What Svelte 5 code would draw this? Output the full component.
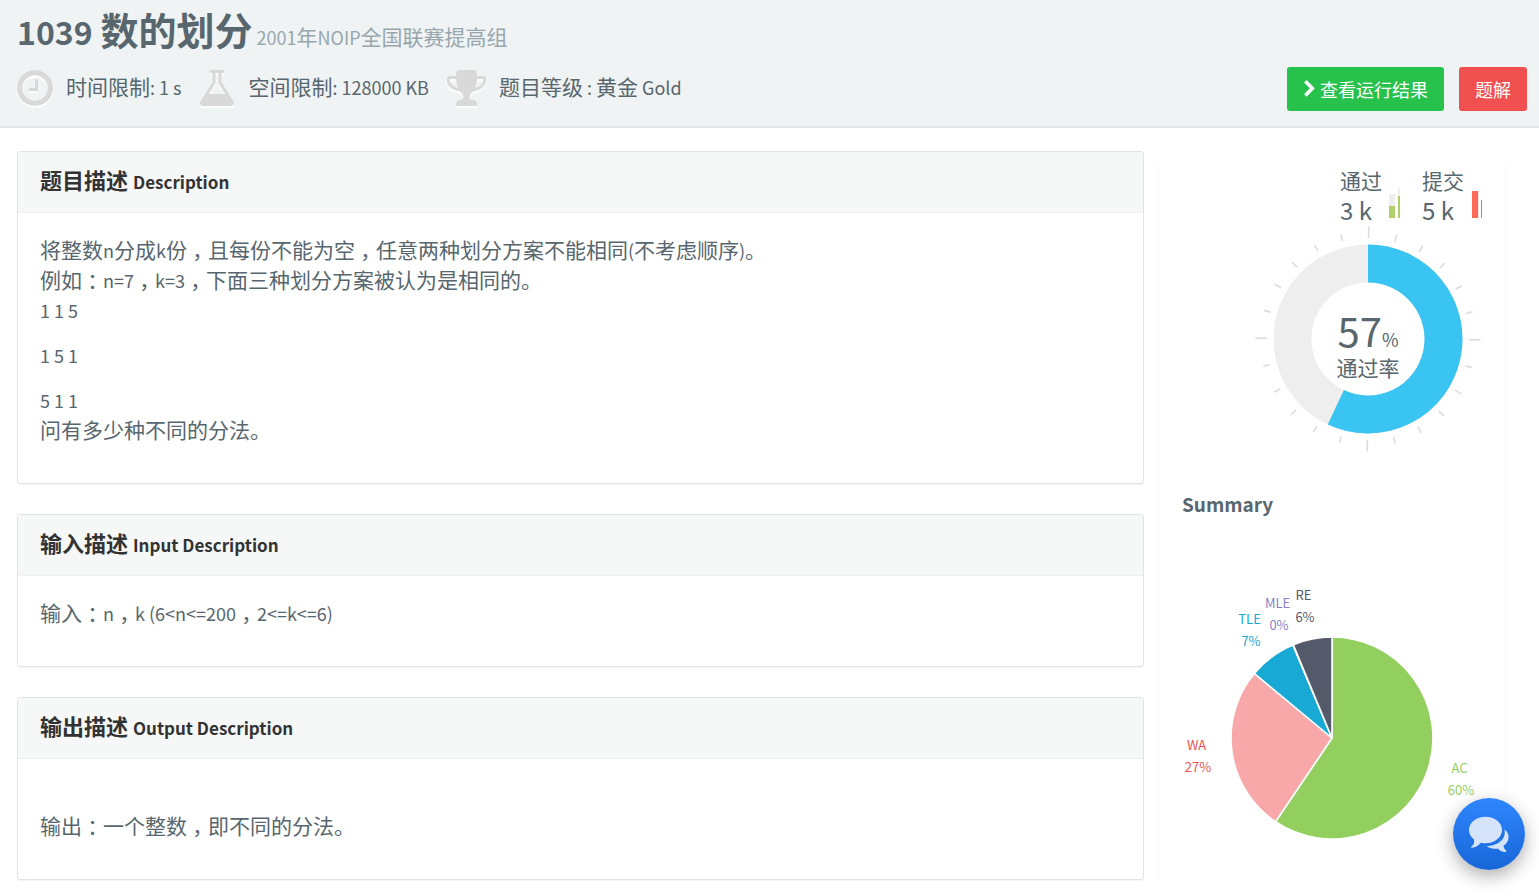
<script>
  const FULL_WIDTH_MARK = /^[\uff0c\uff1a]$/;

  // Splits mixed text so Latin runs and full-width marks can be set in their own style.
  function runs(text) {
    const parts = text.match(/[\u0020-\u007e]+|[\uff0c\uff1a]|[^\u0020-\u007e\uff0c\uff1a]+/g) ?? [];
    return parts.map((part) => ({
      part,
      kind: /^[\u0020-\u007e]/.test(part) ? 'latin' : FULL_WIDTH_MARK.test(part) ? 'mark' : 'han',
    }));
  }

  const panels = [
    {
      title: '题目描述',
      sub: 'Description',
      paragraphs: [
        [
          '将整数n分成k份\uff0c且每份不能为空\uff0c任意两种划分方案不能相同(不考虑顺序)。',
          '例如\uff1an=7\uff0ck=3\uff0c下面三种划分方案被认为是相同的。',
          '1 1 5',
        ],
        ['1 5 1'],
        ['5 1 1', '问有多少种不同的分法。'],
      ],
    },
    { title: '输入描述', sub: 'Input Description', paragraphs: [['输入\uff1an\uff0ck (6<n<=200\uff0c2<=k<=6)']] },
    { title: '输出描述', sub: 'Output Description', paragraphs: [['', '输出\uff1a一个整数\uff0c即不同的分法。']] },
  ];

  function point(cx, cy, r, degrees) {
    const a = (degrees * Math.PI) / 180;
    return `${(cx + r * Math.sin(a)).toFixed(2)} ${(cy - r * Math.cos(a)).toFixed(2)}`;
  }

  function wedge(cx, cy, r, from, to) {
    return `M${cx} ${cy}L${point(cx, cy, r, from)}A${r} ${r} 0 ${to - from > 180 ? 1 : 0} 1 ${point(cx, cy, r, to)}Z`;
  }

  const ticks = Array.from({ length: 24 }, (_, i) => ({ angle: i * 15 + 0.4, long: i % 6 === 0 }));

  const slices = [
    { name: 'AC', share: '60%', from: 0, to: 214, fill: '#93cf5f', ink: '#93cf5f', x: 279, y: 212 },
    { name: 'WA', share: '27%', from: 214, to: 309.7, fill: '#f8a8a9', ink: '#f05050', x: 16, y: 189 },
    { name: 'TLE', share: '7%', from: 309.7, to: 337.2, fill: '#19a9d5', ink: '#19a9d5', x: 69, y: 63 },
    { name: 'MLE', share: '0%', from: 337.2, to: 337.5, fill: '#7266ba', ink: '#8a7fc8', x: 97, y: 47 },
    { name: 'RE', share: '6%', from: 337.5, to: 360, fill: '#555a6b', ink: '#555a6b', x: 123, y: 39 },
  ];
</script>

{#snippet mixed(text)}
  {#each runs(text) as run}<span class={run.kind}>{run.part}</span>{/each}
{/snippet}

<header class="top">
  <h1>
    <span class="number">1039</span>
    <span>数的划分</span>
    <small>{@render mixed('2001年NOIP全国联赛提高组')}</small>
  </h1>
  <div class="meta">
    <ul class="limits">
      <li>
        <svg class="icon" width="36" height="42" viewBox="128 0 1536 1792" aria-hidden="true"><path d="M1024 544v448q0 14-9 23t-23 9h-320q-14 0-23-9t-9-23v-64q0-14 9-23t23-9h224v-352q0-14 9-23t23-9h64q14 0 23 9t9 23zm416 352q0-148-73-273t-198-198-273-73-273 73-198 198-73 273 73 273 198 198 273 73 273-73 198-198 73-273zm224 0q0 209-103 385.5t-279.5 279.5-385.5 103-385.5-103-279.5-279.5-103-385.5 103-385.5 279.5-279.5 385.5-103 385.5 103 279.5 279.5 103 385.5z" /></svg>
        <span class="limit">{@render mixed('时间限制: 1 s')}</span>
      </li>
      <li>
        <svg class="icon" width="36" height="42" viewBox="128 0 1536 1792" aria-hidden="true"><path d="M1591 1448q56 89 21.5 152.5t-140.5 63.5h-1152q-106 0-140.5-63.5t21.5-152.5l503-793v-399h-64q-26 0-45-19t-19-45 19-45 45-19h512q26 0 45 19t19 45-19 45-45 19h-64v399zm-779-725l-272 429h712l-272-429-20-31v-436h-128v436z" /></svg>
        <span class="limit">{@render mixed('空间限制: 128000 KB')}</span>
      </li>
      <li>
        <svg class="icon" width="39" height="42" viewBox="64 0 1664 1792" aria-hidden="true"><path d="M522 883q-74-162-74-371h-256v96q0 78 94.5 162t235.5 113zm1078-275v-96h-256q0 209-74 371 141-29 235.5-113t94.5-162zm128-128v128q0 71-41.5 143t-112 130-173 97.5-215.5 44.5q-42 54-95 95-38 34-52.5 72.5t-14.5 89.5q0 54 30.5 91t97.5 37q75 0 133.5 45.5t58.5 114.5v64q0 14-9 23t-23 9h-832q-14 0-23-9t-9-23v-64q0-69 58.5-114.5t133.5-45.5q67 0 97.5-37t30.5-91q0-51-14.5-89.5t-52.5-72.5q-53-41-95-95-113-5-215.5-44.5t-173-97.5-112-130-41.5-143v-128q0-40 28-68t68-28h288v-96q0-66 47-113t113-47h576q66 0 113 47t47 113v96h288q40 0 68 28t28 68z" /></svg>
        <span class="limit">{@render mixed('题目等级 : 黄金 Gold')}</span>
      </li>
    </ul>
    <div class="actions">
      <button type="button" class="green">
        <svg width="13" height="18" viewBox="300 0 1130 1792" aria-hidden="true"><path d="M1363 877l-742 742q-19 19-45 19t-45-19l-166-166q-19-19-19-45t19-45l531-531-531-531q-19-19-19-45t19-45l166-166q19-19 45-19t45 19l742 742q19 19 19 45t-19 45z" /></svg>
        查看运行结果
      </button>
      <button type="button" class="red">题解</button>
    </div>
  </div>
</header>

<main>
  <div class="panels">
    {#each panels as panel}
      <section class="panel">
        <h2>{panel.title} <small>{panel.sub}</small></h2>
        <div class="body">
          {#each panel.paragraphs as lines}
            <p>{#each lines as line}<span class="line">{@render mixed(line)}</span>{/each}</p>
          {/each}
        </div>
      </section>
    {/each}
  </div>

  <aside>
    <div class="stats">
      <div class="stat">
        <div><span>通过</span><span class="count">3 k</span></div>
        <svg width="12" height="32" viewBox="0 0 12 32" aria-hidden="true">
          <path fill="#eee" d="M0 8h6v12H0zM9 2h2v8H9z" />
          <path fill="#b0cf6c" d="M0 20h6v12H0zM9 10h2v22H9z" />
        </svg>
      </div>
      <div class="stat">
        <div><span>提交</span><span class="count">5 k</span></div>
        <svg width="12" height="32" viewBox="0 0 12 32" aria-hidden="true">
          <path fill="#fb6b5b" d="M1 5h6v27H1zM10 14h1v18h-1z" />
          <path fill="#fde3e0" d="M7 5h1v27H7z" />
        </svg>
      </div>
    </div>

    <div class="gauge">
      <svg width="226" height="226" viewBox="-113 -113 226 226" aria-hidden="true">
        {#each ticks as tick}
          <path d="M0 -101V{tick.long ? -112.5 : -108}" transform="rotate({tick.angle})" stroke="#ddd" stroke-width="1.7" />
        {/each}
        <circle r="75.5" fill="none" stroke="#eee" stroke-width="38" />
        <path d="M{point(0, 0, 75.5, 0)}A75.5 75.5 0 1 1 {point(0, 0, 75.5, 205.2)}" fill="none" stroke="#39c4f1" stroke-width="38" />
      </svg>
      <div class="reading">
        <div class="rate"><span class="value">57</span><span class="latin">%</span></div>
        <div>通过率</div>
      </div>
    </div>

    <h3>Summary</h3>

    <svg class="pie" width="300" height="292" viewBox="0 0 300 292" role="img" aria-label="Summary">
      {#each slices as slice}
        <path d={wedge(150, 177, 101, slice.from, slice.to)} fill={slice.fill} stroke="#fff" stroke-width="1.6" />
      {/each}
      {#each slices as slice}
        <text text-anchor="middle" fill={slice.ink}>
          <tspan x={slice.x} y={slice.y}>{slice.name}</tspan>
          <tspan x={slice.x} dy="22">{slice.share}</tspan>
        </text>
      {/each}
    </svg>
  </aside>
</main>

<button type="button" class="chat" aria-label="Chat">
  <svg width="42" height="38" viewBox="0 0 42 38" aria-hidden="true">
    <path d="M17.500 1.800C8.400 1.800 1 7.700 1 15c0 3.700 1.900 7 5 9.400.6 3-.2 5.500-2.600 7.200-.8.600-.4 1.300.5 1.200 3.800-.4 6.600-2 8.900-5.100 1.500.4 3.100.5 4.700.5C26.600 28.200 34 22.300 34 15S26.600 1.800 17.500 1.800Z" />
    <path d="M36.500 14.600c2.500 1.700 4.100 4.300 4.100 7.200 0 3.700-2 7-5 9 .2 2 .9 3.500 2.600 4.900.6.600.3 1.300-.5 1.300-3.200-.1-5.700-1.200-7.500-3.300-4 .3-8.200-.4-11.500-2.500C28.200 30.900 38.600 25.700 36.500 14.600Z" />
  </svg>
</button>

<style>
  :global(body) {
    margin: 0;
    background: #fff;
    color: #58666e;
    font-family: 'Noto Sans CJK SC', sans-serif;
    font-size: 21px;
    line-height: 30px;
  }

  .latin {
    font-size: 18px;
    line-height: 1;
    white-space: pre;
  }

  .mark {
    display: inline-block;
    width: 1em;
    text-align: center;
    font-feature-settings: 'halt';
  }

  .top {
    padding: 2px 12px 15px 17px;
    background: #eff3f4;
    border-bottom: 2px solid #dee6e6;
  }

  h1 {
    display: flex;
    align-items: baseline;
    height: 54px;
    margin: 0;
    font-size: 38px;
    line-height: 54px;
    font-weight: 700;
  }

  .number {
    margin-right: 8px;
    font-size: 32px;
  }

  h1 small {
    margin-left: 4px;
    font-size: 21px;
    font-weight: 400;
    color: #98a6ad;
  }

  .meta {
    display: flex;
    align-items: flex-start;
    justify-content: space-between;
    padding-top: 11px;
  }

  .limits {
    display: flex;
    gap: 18px;
    margin: 0;
    padding: 0;
    list-style: none;
  }

  .limits li {
    display: flex;
    align-items: flex-start;
    gap: 13px;
  }

  .icon {
    fill: #d9d9d9;
    filter: drop-shadow(0 2px 1px #fff);
  }

  .limit {
    line-height: 38px;
  }

  .actions {
    display: flex;
    gap: 15px;
  }

  .actions button {
    display: flex;
    align-items: center;
    gap: 4px;
    height: 44px;
    padding: 0 16px;
    border: 0;
    border-radius: 3px;
    color: #fff;
    font: 18px 'Noto Sans CJK SC', sans-serif;
  }

  .actions svg {
    fill: #fff;
  }

  .green {
    background: #27c24c;
  }

  .red {
    background: #f05050;
  }

  main {
    display: flex;
    gap: 14px;
    padding: 23px 33px 16px 17px;
  }

  .panels {
    flex: 1;
    display: flex;
    flex-direction: column;
    gap: 30px;
  }

  .panel {
    border: 1px solid #dee5e7;
    border-radius: 3px;
    box-shadow: 0 1px 1px rgba(0, 0, 0, 0.05);
  }

  h2 {
    margin: 0;
    padding: 12px 22px 18px;
    background: #f6f8f8;
    border-bottom: 1px solid #edf1f2;
    color: #333;
    font-size: 22px;
    line-height: 30px;
    font-weight: 700;
  }

  h2 small {
    font-size: 17px;
    line-height: 1;
  }

  .body {
    padding: 21px 22px 39px;
  }

  p {
    margin: 0;
  }

  p + p {
    margin-top: 15px;
  }

  .line {
    display: block;
    min-height: 30px;
  }

  aside {
    box-sizing: border-box;
    width: 348px;
    margin-top: 14px;
    padding: 0 22px 0 23px;
    border: solid #fafafa;
    border-width: 0 1px;
  }

  .stats {
    display: flex;
    justify-content: flex-end;
    gap: 21px;
  }

  .stat {
    display: flex;
    align-items: flex-end;
    gap: 7px;
  }

  .stat span {
    display: block;
  }

  .stat svg {
    margin-bottom: 7px;
  }

  .count {
    font-size: 24px;
  }

  .gauge {
    display: grid;
    width: 226px;
    margin: 1px 0 0 73px;
  }

  .gauge > * {
    grid-area: 1 / 1;
  }

  .reading {
    align-self: center;
    padding-top: 12px;
    text-align: center;
  }

  .rate {
    height: 44px;
    line-height: 44px;
  }

  .value {
    font-size: 40px;
  }

  h3 {
    margin: 37px 0 0;
    font-size: 19px;
    line-height: 30px;
    font-weight: 700;
  }

  .pie {
    display: block;
    margin-top: 42px;
    font-size: 13px;
  }

  .chat {
    position: fixed;
    right: 14px;
    bottom: 26px;
    display: grid;
    place-items: center;
    width: 72px;
    height: 72px;
    padding: 0;
    border: 0;
    border-radius: 50%;
    background: linear-gradient(#2f86fc, #1766d8);
    box-shadow: 0 6px 18px rgba(0, 0, 0, 0.32);
  }

  .chat svg {
    fill: #d5e4fb;
  }
</style>
